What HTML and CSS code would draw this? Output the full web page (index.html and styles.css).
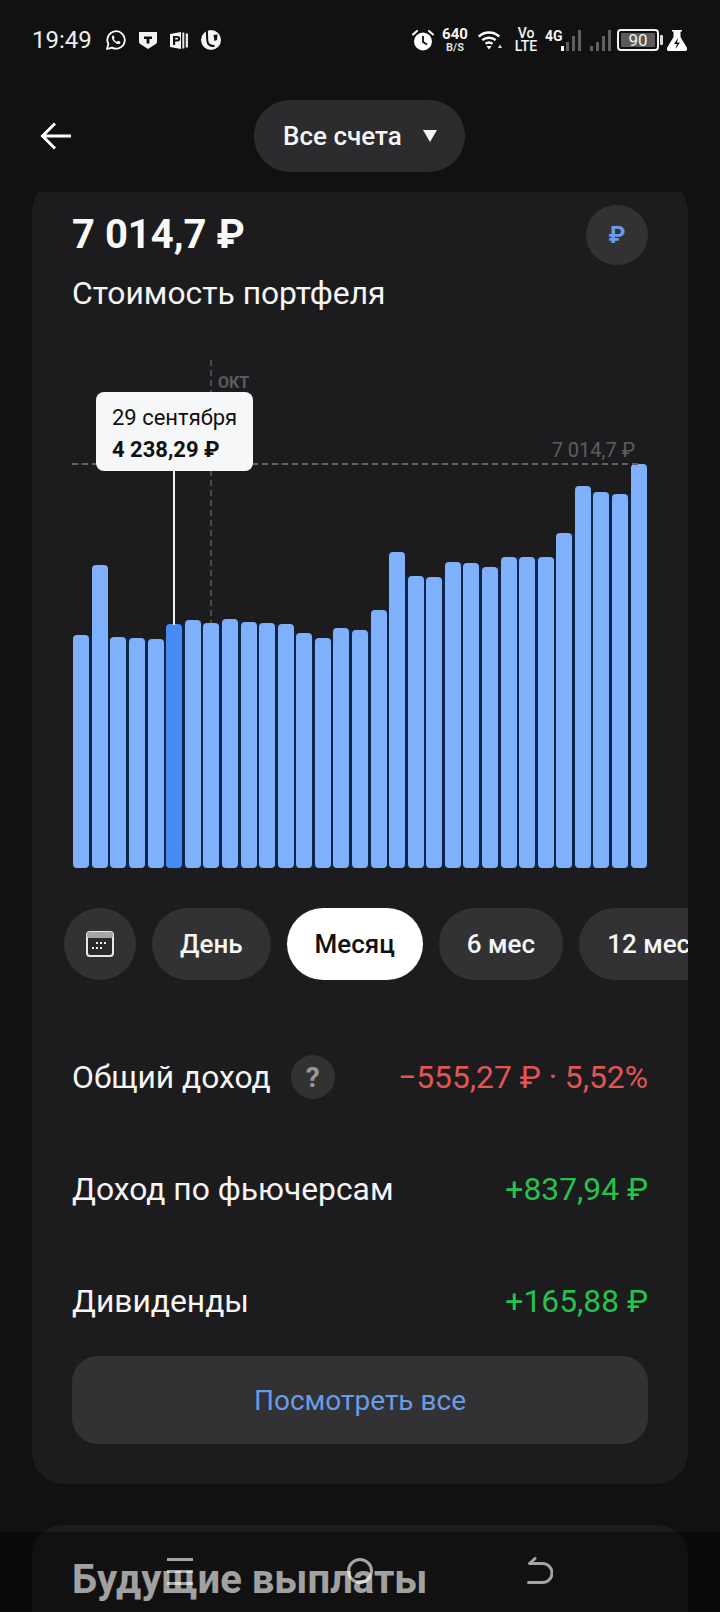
FILE: index.html
```html
<!DOCTYPE html>
<html lang="ru">
<head>
<meta charset="utf-8">
<title>Стоимость портфеля</title>
<link rel="stylesheet" href="styles.css">
</head>
<body>
<header class="statusbar">
  <span class="time">19:49</span>
  <div class="status-left">
    <svg class="ic" width="20" height="20" viewBox="0 0 20 20"><path d="M1 19l1.400-5A8.700 8.700 0 1 1 6 17.600z" fill="none" stroke="#fff" stroke-width="1.800" stroke-linejoin="round"/><path d="M7 5.600c-.8.300-1.300 1.300-1 2.600.5 2.300 3.300 5.300 5.900 5.800 1.200.2 2.200-.4 2.500-1.300.1-.4 0-.7-.3-.9l-1.700-.9c-.3-.1-.5 0-.7.200l-.7.800c-1.400-.5-2.700-1.800-3.300-3.200l.7-.8c.2-.2.2-.4.1-.7l-.8-1.500c-.2-.2-.4-.2-.7-.1z" fill="#fff"/></svg>
    <svg class="ic" width="18" height="17" viewBox="0 0 18 17"><path d="M0 0h18v9.500c0 1.500-.8 2.500-2 3.100L9 17l-7-4.400C.8 12 0 11 0 9.500z" fill="#f2f2f2"/><path d="M5 4.500h8v2.600h-2.600v4.400H7.600V7.100H5z" fill="#111"/></svg>
    <svg class="ic" width="18" height="17" viewBox="0 0 18 17"><path d="M0 2 11 0v17L0 15z" fill="#f5f5f5"/><path d="M3 4h4.500a2.700 2.700 0 0 1 0 5.400H5.200V13H3zM5.200 5.800v1.800h2a.9.9 0 0 0 0-1.800z" fill="#111" fill-rule="evenodd"/><path d="M12.300.5h2v16h-2zM15.700 1.500H18v14h-2.300z" fill="#e8e8e8"/></svg>
    <svg class="ic" width="20" height="20" viewBox="0 0 20 20"><circle cx="10" cy="10" r="10" fill="#f5f5f5"/><path d="M5.800 0 6.300 10.500c.2 4 3.200 6 7.200 5.200" fill="none" stroke="#111" stroke-width="2"/><path d="M12.500 5 16.500 4.500 16 10 13.500 11z" fill="#111"/></svg>
  </div>
  <div class="status-right">
    <svg class="ic alarm" width="22" height="22" viewBox="0 0 22 22"><path d="M1 5.500 5 2M21 5.500 17 2" stroke="#fff" stroke-width="2" stroke-linecap="round"/><circle cx="11" cy="12.500" r="9" fill="#fff"/><path d="M11 7v6l4 2.500" fill="none" stroke="#111" stroke-width="1.800"/></svg>
    <div class="speed"><b>640</b><small>B/S</small></div>
    <svg class="ic wifi" width="24" height="20" viewBox="0 0 24 20"><g fill="none" stroke="#fff" stroke-width="2.400"><path d="M.8 6.500c5.700-5.300 14.700-5.300 20.400 0"/><path d="M4.300 10.200c3.700-3.200 9.700-3.200 13.400 0"/><path d="M7.500 13.800c2-1.600 5-1.600 7 0"/></g><path d="M8.500 16h5L11 19.500z" fill="#fff"/><path d="M20 18l2-3.500 2 3.500z" fill="#ddd"/></svg>
    <div class="volte"><span>Vo</span><span>LTE</span></div>
    <span class="net">4G</span>
    <svg class="signal first" width="21" height="21" viewBox="0 0 21 21"><rect x="0" y="16" width="3" height="5" fill="#fff"/><rect x="5" y="12" width="3" height="9" fill="#606060"/><rect x="11" y="6" width="3" height="15" fill="#606060"/><rect x="17" y="0" width="3" height="21" fill="#606060"/></svg>
    <svg class="signal" width="21" height="21" viewBox="0 0 21 21"><rect x="0" y="16" width="3" height="5" fill="#606060"/><rect x="6" y="12" width="3" height="9" fill="#606060"/><rect x="12" y="6" width="3" height="15" fill="#606060"/><rect x="18" y="0" width="3" height="21" fill="#606060"/></svg>
    <div class="battery"><span class="battery-level">90</span></div>
    <span class="battery-nub"></span>
    <svg class="ic flask" width="20" height="21" viewBox="0 0 20 21"><path d="M5 0h10v1.500h-1.500v5.500L20 18c.5 1.500-.2 3-2 3H2c-1.800 0-2.500-1.500-2-3L6.500 7V1.500H5z" fill="#fff"/><path d="M11 8l-4 6h3l-1.500 5 4.500-6.500h-3z" fill="#111"/></svg>
  </div>
</header>

<nav class="topbar">
  <svg class="back" width="32" height="32" viewBox="0 0 32 32"><path d="M31 16H3M15 3.500 2.500 16 15 28.500" fill="none" stroke="#fff" stroke-width="3"/></svg>
  <div class="account-pill"><span>Все счета</span><i class="caret"></i></div>
</nav>

<main class="scroll">
  <section class="card">
    <div class="summary">
      <div>
        <div class="amount">7 014,7 ₽</div>
        <div class="label">Стоимость портфеля</div>
      </div>
      <div class="currency">₽</div>
    </div>

    <div class="chart">
      <div class="bars">
        <i class="bar" style="height:233px"></i><i class="gap" style="height:233px"></i>
        <i class="bar" style="height:303px"></i><i class="gap" style="height:231px"></i>
        <i class="bar" style="height:231px"></i><i class="gap" style="height:230px"></i>
        <i class="bar" style="height:230px"></i><i class="gap" style="height:229px"></i>
        <i class="bar" style="height:229px"></i><i class="gap" style="height:229px"></i>
        <i class="bar active" style="height:244px"></i><i class="gap" style="height:244px"></i>
        <i class="bar" style="height:248px"></i><i class="gap" style="height:245px"></i>
        <i class="bar" style="height:245px"></i><i class="gap" style="height:245px"></i>
        <i class="bar" style="height:249px"></i><i class="gap" style="height:246px"></i>
        <i class="bar" style="height:246px"></i><i class="gap" style="height:245px"></i>
        <i class="bar" style="height:245px"></i><i class="gap" style="height:244px"></i>
        <i class="bar" style="height:244px"></i><i class="gap" style="height:235px"></i>
        <i class="bar" style="height:235px"></i><i class="gap" style="height:230px"></i>
        <i class="bar" style="height:230px"></i><i class="gap" style="height:230px"></i>
        <i class="bar" style="height:240px"></i><i class="gap" style="height:238px"></i>
        <i class="bar" style="height:238px"></i><i class="gap" style="height:238px"></i>
        <i class="bar" style="height:258px"></i><i class="gap" style="height:258px"></i>
        <i class="bar" style="height:316px"></i><i class="gap" style="height:292px"></i>
        <i class="bar" style="height:292px"></i><i class="gap" style="height:291px"></i>
        <i class="bar" style="height:291px"></i><i class="gap" style="height:291px"></i>
        <i class="bar" style="height:306px"></i><i class="gap" style="height:305px"></i>
        <i class="bar" style="height:305px"></i><i class="gap" style="height:301px"></i>
        <i class="bar" style="height:301px"></i><i class="gap" style="height:301px"></i>
        <i class="bar" style="height:311px"></i><i class="gap" style="height:311px"></i>
        <i class="bar" style="height:311px"></i><i class="gap" style="height:311px"></i>
        <i class="bar" style="height:311px"></i><i class="gap" style="height:311px"></i>
        <i class="bar" style="height:335px"></i><i class="gap" style="height:335px"></i>
        <i class="bar" style="height:382px"></i><i class="gap" style="height:376px"></i>
        <i class="bar" style="height:376px"></i><i class="gap" style="height:374px"></i>
        <i class="bar" style="height:374px"></i><i class="gap" style="height:374px"></i>
        <i class="bar" style="height:404px"></i>
      </div>
      <div class="guide-h"></div>
      <div class="guide-v"></div>
      <span class="month">ОКТ</span>
      <span class="max-value">7 014,7 ₽</span>
      <div class="cursor"></div>
      <div class="tooltip">
        <div class="tooltip-date">29 сентября</div>
        <div class="tooltip-value">4 238,29 ₽</div>
      </div>
    </div>

    <div class="periods">
      <div class="period icon">
        <svg width="28" height="26" viewBox="0 0 28 26"><rect x="1" y="1" width="26" height="24" rx="3" fill="#2a2a2c" stroke="#e8e8e8" stroke-width="2"/><rect x="1" y="1" width="26" height="6" rx="2" fill="#a4a4a6"/><g fill="#f0f0f0"><rect x="10" y="11" width="2" height="2"/><rect x="14" y="11" width="2" height="2"/><rect x="18" y="11" width="2" height="2"/><rect x="10" y="16" width="2" height="2"/><rect x="14" y="16" width="2" height="2"/><rect x="6" y="16" width="2" height="2"/></g></svg>
      </div>
      <div class="period">День</div>
      <div class="period selected">Месяц</div>
      <div class="period">6 мес</div>
      <div class="period">12 мес</div>
    </div>

    <div class="rows">
      <div class="row">
        <div class="row-title"><span>Общий доход</span><span class="help">?</span></div>
        <span class="loss">−555,27 ₽ · 5,52%</span>
      </div>
      <div class="row">
        <span>Доход по фьючерсам</span>
        <span class="gain">+837,94 ₽</span>
      </div>
      <div class="row">
        <span>Дивиденды</span>
        <span class="gain">+165,88 ₽</span>
      </div>
    </div>
    <div class="more">Посмотреть все</div>
  </section>

  <section class="card next">
    <h2 class="next-title">Будущие выплаты</h2>
  </section>
</main>

<div class="navbar">
  <svg width="26" height="28" viewBox="0 0 26 28"><path d="M0 2.500h26M0 14.500h26M0 26.500h26" stroke="currentColor" stroke-width="3"/></svg>
  <svg width="26" height="28" viewBox="0 0 26 28"><circle cx="13" cy="14" r="11.500" fill="none" stroke="currentColor" stroke-width="3"/></svg>
  <svg width="26" height="28" viewBox="0 0 26 28"><path d="M8 1.500 2.500 6.500h13a9.500 9.500 0 0 1 0 19H1.500" fill="none" stroke="currentColor" stroke-width="3" stroke-linecap="round" stroke-linejoin="round"/></svg>
</div>
</body>
</html>
```

FILE: styles.css
```css
* { box-sizing: border-box; }
html, body { margin: 0; padding: 0; }
body {
  position: relative;
  width: 720px;
  height: 1612px;
  overflow: hidden;
  display: flex;
  flex-direction: column;
  background: #111112;
  color: #f5f5f5;
  font-family: Roboto, "Noto Sans", "DejaVu Sans", sans-serif;
}

/* status bar */
.statusbar {
  flex: none;
  height: 80px;
  display: flex;
  align-items: center;
  padding: 0 33px 0 32px;
}
.time { font-size: 24px; color: #eee; width: 57px; }
.status-left { display: flex; align-items: center; gap: 13px; margin-left: 17px; }
.status-right { display: flex; align-items: center; margin-left: auto; }
.ic { display: block; }
.speed {
  display: flex; flex-direction: column; align-items: center;
  margin-left: 9px; width: 24px; line-height: 1;
}
.speed b { font-size: 15px; font-weight: 700; }
.speed small { font-size: 11px; font-weight: 700; color: #ddd; }
.wifi { margin-left: 11px; }
.volte {
  display: flex; flex-direction: column; align-items: center;
  margin-left: 14px; font-size: 14px; font-weight: 500; line-height: 13px; width: 20px;
}
.net { margin-left: 9px; font-size: 14px; font-weight: 700; width: 16px; margin-top: -9px; }
.signal { display: block; }
.signal + .signal { margin-left: 8px; }
.battery {
  margin-left: 6px; width: 42px; height: 22px;
  border: 2px solid #f2f2f2; border-radius: 4px;
  padding: 2px;
  display: flex;
}
.battery-level {
  flex: 1; background: #5a5a5a; border-radius: 1px;
  font-size: 17px; line-height: 14px; text-align: center; color: #f0f0f0;
}
.battery-nub { width: 3px; height: 10px; background: #ddd; margin-left: 1px; border-radius: 1px; }
.flask { margin-left: 4px; }

/* top bar */
.topbar {
  flex: none;
  height: 112px;
  display: flex;
  align-items: flex-start;
  padding: 20px 0 0 40px;
}
.back { display: block; margin-top: 20px; margin-right: 182px; flex: none; }
.account-pill {
  height: 72px;
  display: flex;
  align-items: center;
  gap: 21px;
  padding: 0 28px 0 29px;
  border-radius: 36px;
  background: #2c2c2e;
  font-size: 26px;
  font-weight: 500;
}
.caret {
  width: 0; height: 0;
  border-left: 7px solid transparent;
  border-right: 7px solid transparent;
  border-top: 12px solid #f5f5f5;
}

/* cards */
.scroll { flex: 1; min-height: 0; overflow: hidden; padding: 0 32px; }
.card {
  margin-top: -12px;
  padding: 25px 40px 40px;
  border-radius: 32px;
  background: #1c1c1e;
}
.card.next { margin-top: 41px; padding-top: 30px; height: 200px; }

.summary { display: flex; justify-content: space-between; align-items: flex-start; }
.amount { margin-top: 6px; font-size: 40px; line-height: 48px; font-weight: 700; color: #f8f8f8; }
.label { margin-top: 14px; font-size: 31.8px; line-height: 40px; }
.currency {
  width: 62px; height: 60px;
  border-radius: 50%;
  background: #323234;
  color: #6a9be8;
  font-size: 24px;
  font-weight: 700;
  display: flex; align-items: center; justify-content: center;
}

/* chart */
.chart { position: relative; height: 508px; margin-top: 47px; }
.bars {
  height: 100%;
  display: flex;
  align-items: flex-end;
  padding: 0 1.3px;
}
.bar {
  flex: none;
  width: 16px;
  background: #7eb0fb;
  border-radius: 4px;
}
.bar.active { background: #448bf6; }
.gap { flex: 1; background: #0e2348; }
.guide-h {
  position: absolute; left: 0; right: 8px; top: 103px;
  height: 2px;
  background: repeating-linear-gradient(90deg, #626264 0 6px, transparent 6px 10px);
}
.guide-v {
  position: absolute; left: 138px; top: 0; width: 2px; height: 263px;
  background: repeating-linear-gradient(180deg, #4a4a4c 0 6px, transparent 6px 10px);
}
.month {
  position: absolute; left: 146px; top: 13px;
  font-size: 16px; line-height: 20px; font-weight: 700; color: #5c5c5e;
}
.max-value {
  position: absolute; right: 13px; top: 78px;
  font-size: 20px; line-height: 24px; color: #5e5e60;
}
.cursor {
  position: absolute; left: 101px; top: 110px; width: 2px; height: 155px;
  background: #f0f0f0;
}
.tooltip {
  position: absolute; left: 24px; top: 32px;
  width: 157px; height: 79px;
  padding: 10px 16px 0;
  border-radius: 8px;
  background: #f6f7f9;
  color: #111;
  white-space: nowrap;
}
.tooltip-date { font-size: 22px; line-height: 32px; }
.tooltip-value { font-size: 22px; line-height: 32px; font-weight: 700; }

/* period selector */
.periods {
  display: flex;
  gap: 16px;
  margin: 40px -40px 0 -8px;
  overflow: hidden;
}
.period {
  flex: none;
  height: 72px;
  padding: 0 28px;
  border-radius: 36px;
  background: #323234;
  font-size: 26px;
  font-weight: 500;
  display: flex; align-items: center;
}
.period.icon { width: 72px; padding: 0; justify-content: center; }
.period.selected { background: #fff; color: #111; }

/* rows */
.rows { margin-top: 41px; }
.row {
  height: 112px;
  display: flex;
  align-items: center;
  justify-content: space-between;
  font-size: 31.8px;
}
.row-title { display: flex; align-items: center; gap: 20px; }
.help {
  width: 44px; height: 44px;
  border-radius: 50%;
  background: #323234;
  color: #98989a;
  font-size: 28px;
  font-weight: 700;
  display: flex; align-items: center; justify-content: center;
}
.loss { color: #e25555; }
.gain { color: #27c24c; }
.more {
  margin-top: -1px;
  height: 88px;
  border-radius: 26px;
  background: #323234;
  color: #6a9be8;
  font-size: 28px;
  display: flex; align-items: center; justify-content: center;
}
.next-title { margin: 0; font-size: 40px; line-height: 50px; font-weight: 700; color: #fff; }

/* system navigation, translucent over the page */
.navbar {
  position: absolute; left: 0; right: 0; bottom: 0;
  height: 80px;
  padding-top: 25px;
  display: flex;
  justify-content: center;
  align-items: flex-start;
  gap: 154px;
  background: rgba(0, 0, 0, .37);
  color: rgba(255, 255, 255, .62);
}
```
